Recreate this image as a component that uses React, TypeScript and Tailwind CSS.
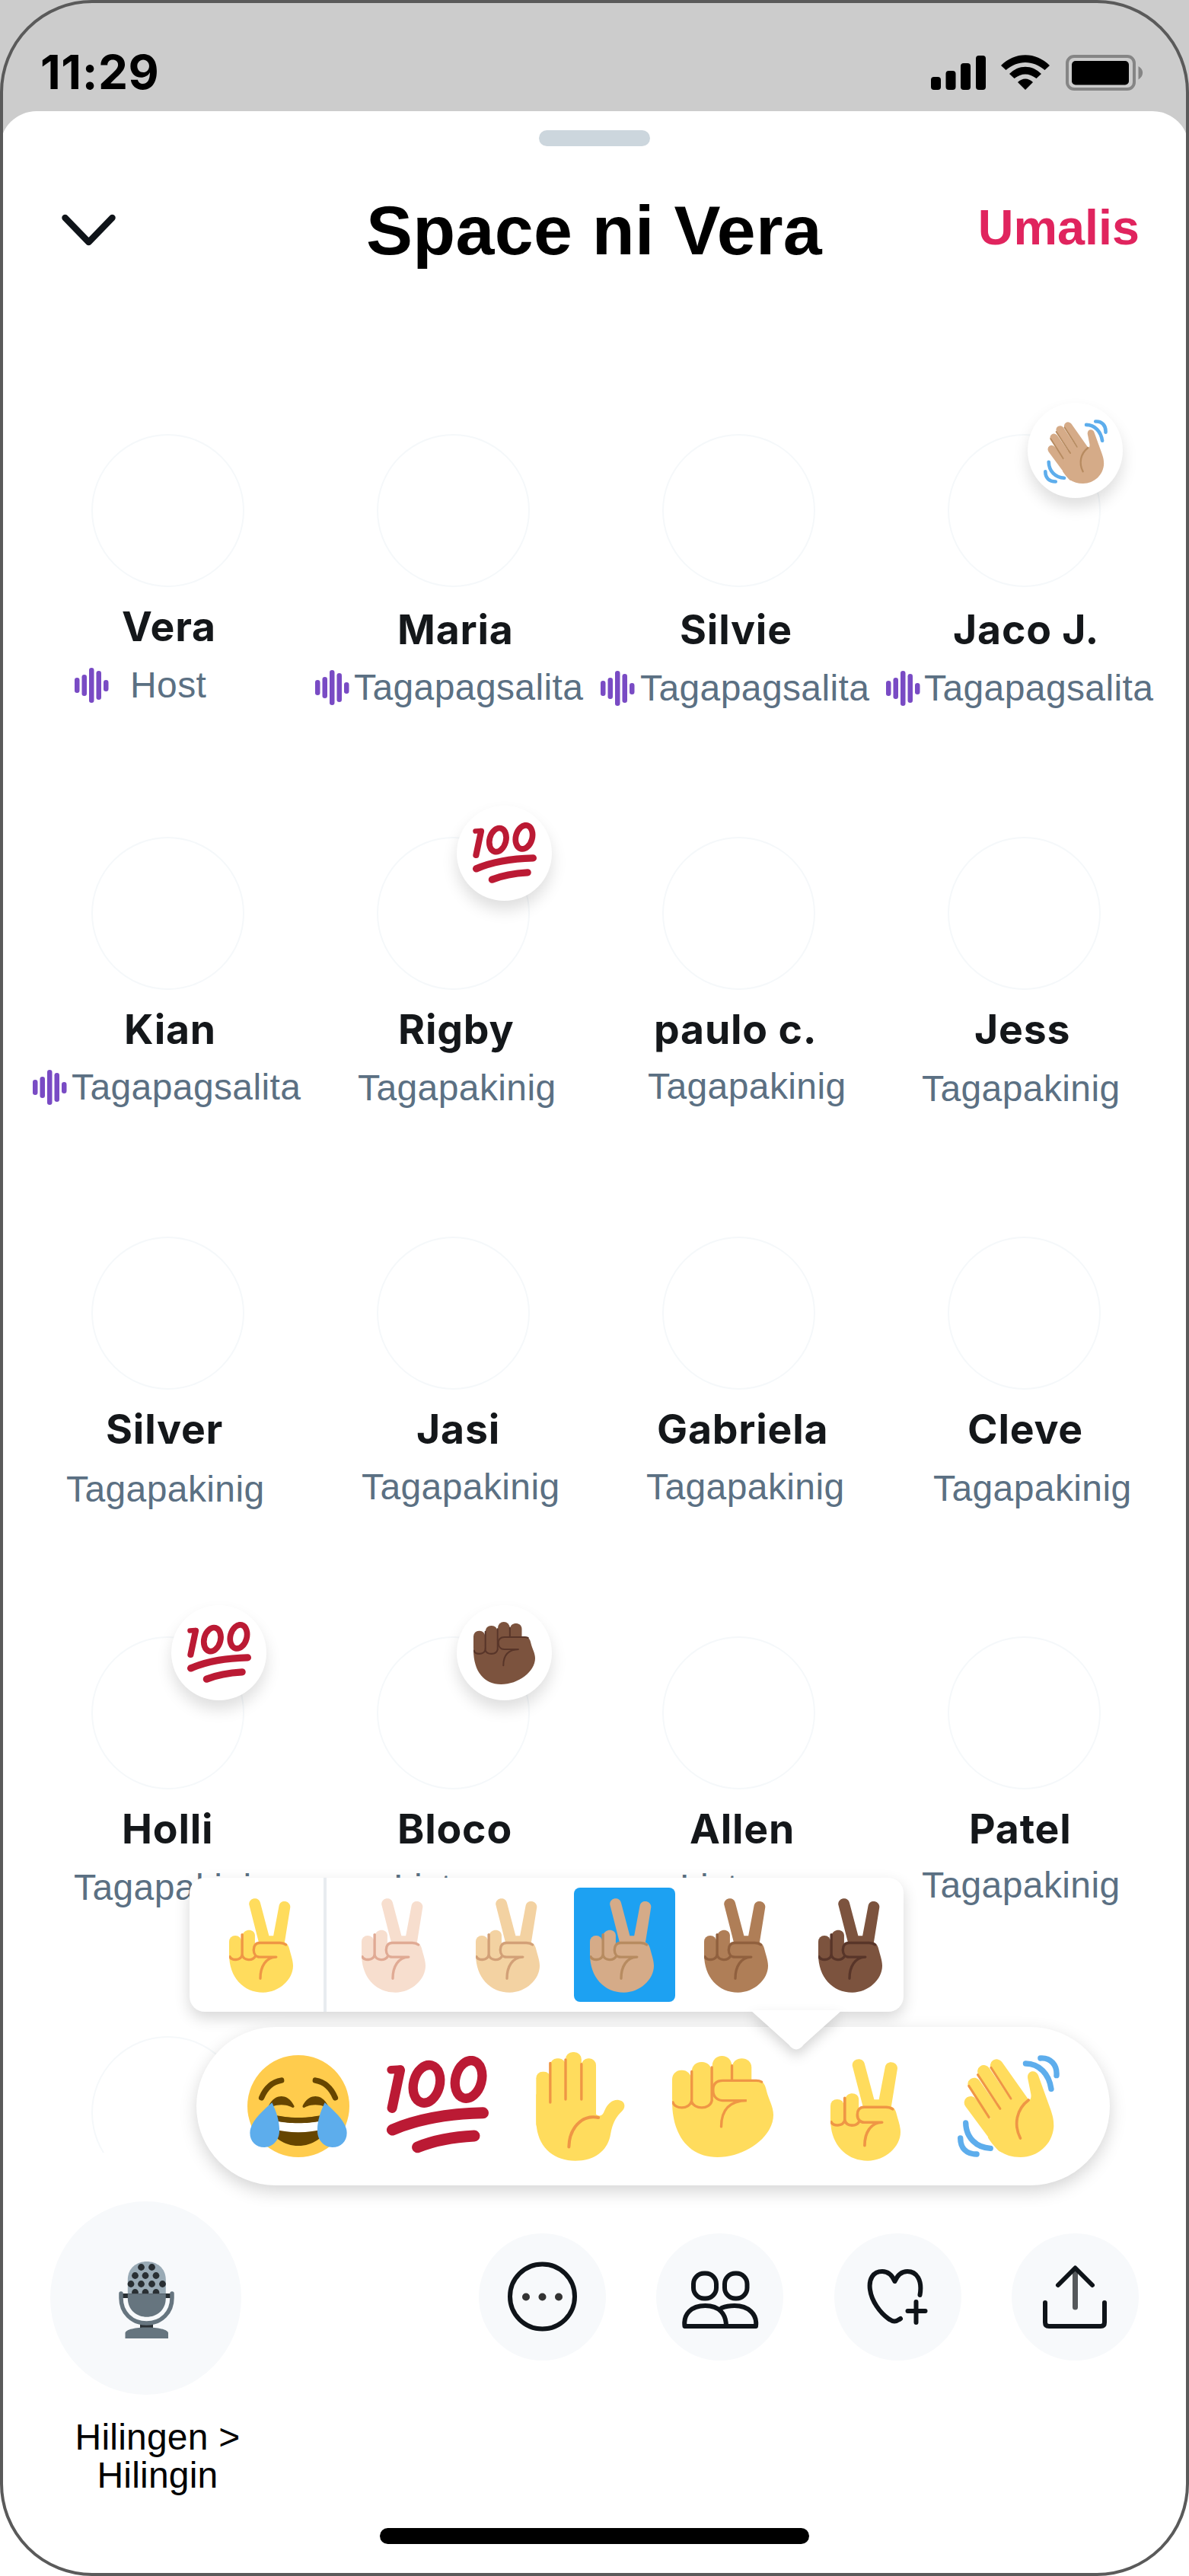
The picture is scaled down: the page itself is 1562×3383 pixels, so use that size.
import type { ReactNode } from "react";
import clsx from "clsx";

/* ---------- emoji ---------- */

const SKIN = {
  default: ["#FFDC5D", "#EF9645"],
  light: ["#F7DECE", "#E0AA94"],
  mediumLight: ["#F3D2A2", "#D2A077"],
  medium: ["#D5AB88", "#B78B60"],
  mediumDark: ["#AF7E57", "#90603E"],
  dark: ["#7C533E", "#583529"],
};

type Tone = keyof typeof SKIN;
type EmojiProps = { className?: string; tone?: Tone };

function Victory({ className, tone = "default" }: EmojiProps) {
  const [fill, line] = SKIN[tone];
  return (
    <svg viewBox="242 160 250 370" preserveAspectRatio="none" className={className}>
      <g fill={fill}>
        <path d="M320 184C319 156 359 152 364 178L398 307H415L437 190C441 162 483 168 481 195L457 345H361Z" />
        <rect x="242" y="306" width="48" height="98" rx="23" />
        <path d="M294 305C300 277 343 278 343 307V395H294Z" />
        <path d="M242 380H300L343 350C350 335 360 329 380 329H440C465 329 474 340 478 360C483 380 492 403 492 425C492 478 438 529 375 529C298 529 242 470 242 380Z" />
      </g>
      <g fill="none" stroke={line} strokeWidth="10" strokeLinecap="round" strokeLinejoin="round">
        <path d="M293 302V382" />
        <path d="M245 389C252 404 285 406 293 383C301 405 333 406 344 388" />
        <path d="M464 342C456 336 450 334.500 440 334.500H362C346 334.500 338 346 338 362C338 379 348 390 362 390H426C385 391 364 428 364 474" />
      </g>
    </svg>
  );
}

function Fist({ className, tone = "default" }: EmojiProps) {
  const [fill, line] = SKIN[tone];
  return (
    <svg viewBox="0 0 398 402" preserveAspectRatio="none" className={className}>
      <g fill={fill}>
        <rect x="0" y="57" width="75" height="150" rx="36" />
        <rect x="77" y="24" width="78" height="183" rx="37" />
        <rect x="158" y="0" width="76" height="200" rx="37" />
        <path d="M236 46C236 -2 312 -2 312 46V120H236Z" />
        <path d="M0 180L160 110C175 95 190 97 200 97H335C358 97 366 115 371 138C380 175 398 200 398 234C398 320 290 402 178 402C70 402 0 320 0 180Z" />
      </g>
      <g fill="none" stroke={line} strokeWidth="10" strokeLinecap="round">
        <path d="M77 62V175M156 45V175M235 38V94" />
        <path d="M3 184C10 212 66 214 76 180C86 214 148 214 156 178" />
        <path d="M352 103C345 99 338 98 330 98H200C175 98 161 110 161 135C161 162 177 177 198 177H293C225 178 193 215 193 281" />
      </g>
    </svg>
  );
}

function RaisedHand({ className, tone = "default" }: EmojiProps) {
  const [fill, line] = SKIN[tone];
  return (
    <svg viewBox="-46 765 348 427" preserveAspectRatio="none" className={className}>
      <g fill={fill}>
        <rect x="-45" y="842" width="56" height="230" rx="25" />
        <rect x="10" y="790" width="60" height="250" rx="26" />
        <rect x="70" y="765" width="62" height="250" rx="28" />
        <rect x="132" y="790" width="57" height="250" rx="26" />
        <path d="M-45 930H188V1008C205 1020 215 1015 222 995C235 965 255 950 278 953C304 957 306 982 290 997C265 1020 252 1050 246 1085C236 1150 185 1191 108 1191C20 1191 -45 1135 -45 1030Z" />
      </g>
      <g fill="none" stroke={line} strokeWidth="10" strokeLinecap="round">
        <path d="M10 808V962M70 795V950M132 812V950" />
        <path d="M198 1022C130 1008 84 1068 83 1137" strokeWidth="12" />
      </g>
    </svg>
  );
}

function Wave({ className, tone = "default" }: EmojiProps) {
  const [fill, line] = SKIN[tone];
  return (
    <svg viewBox="293 297 400 402" preserveAspectRatio="none" className={className}>
      <g stroke={fill} strokeWidth="50" strokeLinecap="round">
        <path d="M446 338L560 500M396 361L530 560M358 411L490 600M344 484L470 655" />
      </g>
      <path
        fill={fill}
        d="M430 500L545 450L572 474C580 474 583 462 580 448L568 388C564 356 602 352 610 378L650 490C664 528 670 545 670 575C668 645 610 699 540 699C470 699 440 665 412 622Z"
      />
      <g fill="none" stroke={line} strokeWidth="9" strokeLinecap="round">
        <path d="M424 346L502 468M372 374L460 508M337 418L416 542" />
        <path d="M571 474C524 510 512 570 539 624" strokeWidth="11" />
      </g>
      <g fill="none" stroke="#5DADEC" strokeWidth="22" strokeLinecap="round">
        <path d="M618 309C658 306 684 336 681 377M560 330C613 330 652 372 660 430" />
        <path d="M304 624C304 664 328 687 368 687M325 564C326 622 367 662 422 664" />
      </g>
    </svg>
  );
}

function Hundred({ className }: EmojiProps) {
  return (
    <svg viewBox="0 0 36 36" className={className}>
      <g fill="none" stroke="#BB1A34" strokeLinecap="round" strokeLinejoin="round">
        <line x1="1.500" y1="4.900" x2="4.900" y2="4.700" strokeWidth="2.800" />
        <line x1="4.700" y1="5.100" x2="1.900" y2="18.400" strokeWidth="3.500" />
        <ellipse cx="14.100" cy="9.900" rx="4.600" ry="6.800" strokeWidth="3.300" transform="rotate(15 14.1 9.9)" />
        <ellipse cx="28.900" cy="8.300" rx="4.600" ry="6.800" strokeWidth="3.300" transform="rotate(15 28.900 8.300)" />
        <path d="M2 26.100C11 22.200 22 20.400 34 20.100M10.900 32.200C17 29.700 23 28.600 30.900 28.200" strokeWidth="4" />
      </g>
    </svg>
  );
}

function Joy({ className }: EmojiProps) {
  return (
    <svg viewBox="0 0 36 36" className={className}>
      <circle cx="18" cy="18" r="18" fill="#FFCC4D" />
      <g fill="none" stroke="#664500" strokeLinecap="round">
        <path d="M5 15C6.600 11.200 9 9.400 12 8.900M31 15C29.400 11.200 27 9.400 24 8.900" strokeWidth="2" />
      </g>
      <path
        fill="#664500"
        d="M28.457 17.797c-.06-.135-1.499-3.297-4.457-3.297-2.957 0-4.397 3.162-4.457 3.297-.3.700.400.900.755.605.012-.009 1.262-.902 3.702-.902 2.426 0 3.674.881 3.702.901.500.300 1.100-.1.755-.604zM16.457 17.797c-.06-.135-1.499-3.297-4.457-3.297-2.957 0-4.397 3.162-4.457 3.297-.3.700.400.900.755.605.012-.009 1.262-.902 3.702-.902 2.426 0 3.674.881 3.702.901.500.300 1.100-.1.755-.604z"
      />
      <path
        fill="#664500"
        d="M18 22c-3.623 0-6.027-.422-9-1-.679-.131-2 0-2 2 0 4 4.595 9 11 9 6.404 0 11-5 11-9 0-2-1.321-2.132-2-2-2.973.578-5.377 1-9 1z"
      />
      <path fill="#FFF" d="M9 23s3 1 9 1 9-1 9-1v3Q23 27.200 18 27.200T9 26z" />
      <g fill="#5DADEC">
        <path d="M8.700 16.700C10.500 20.500 11.300 23.500 11.300 26.600C11.300 30 9 32.400 6 32.500C3 32.500.900 30.500.900 27.400C.900 23.500 5.500 19.500 8.700 16.700Z" />
        <path d="M27.300 16.700C25.500 20.500 24.700 23.500 24.700 26.600C24.700 30 27 32.400 30 32.500C33 32.500 35.100 30.500 35.100 27.400C35.100 23.500 30.500 19.500 27.300 16.700Z" />
      </g>
    </svg>
  );
}

/* ---------- status bar ---------- */

function StatusBar() {
  return (
    <div className="flex h-[146px] items-start justify-between bg-[#ccc]">
      <span className="mt-[57px] ml-[53px] font-[Inter,sans-serif] text-[62px] leading-[75px] font-bold tracking-[0.6px]">
        11:29
      </span>
      <svg className="mt-[70px] mr-[58px] h-[52px] w-[284px]" viewBox="1220 70 284 52">
        <rect x="1223" y="101" width="13" height="17" rx="4" />
        <rect x="1242.500" y="93" width="13" height="25" rx="4" />
        <rect x="1262" y="83" width="13" height="35" rx="4" />
        <rect x="1282" y="73" width="13" height="45" rx="4" />
        <path d="M1315 86C1333 67.500 1361 67.500 1379 86L1372.500 92C1357 78.500 1337 78.500 1321.500 92Z" />
        <path d="M1326 97C1338 84.500 1356 84.500 1368 97L1361.500 103C1352 95.500 1342 95.500 1332.500 103Z" />
        <path d="M1337 108C1343 102 1351 102 1357 108L1347 118Z" />
        <rect x="1402" y="74" width="88" height="43" rx="9" fill="none" stroke="#858585" strokeWidth="4" />
        <rect x="1408" y="80" width="75" height="31.500" rx="5" />
        <path d="M1495.500 87C1503 91 1503 100 1495.500 104.500Z" fill="#858585" />
      </svg>
    </div>
  );
}

function Header() {
  return (
    <div className="mt-[50px] flex h-[120px] items-start font-['Liberation_Sans',Arial,sans-serif] font-bold">
      <svg className="mt-[39px] ml-[80px] h-[43px] w-[73px]" viewBox="0 0 73 43">
        <path d="M5.500 5L36.500 37L67.500 5" fill="none" stroke="#0f1419" strokeWidth="8.500" strokeLinecap="round" strokeLinejoin="round" />
      </svg>
      <h1 className="ml-[328px] text-[91.5px] leading-[120px] tracking-[0.3px] whitespace-nowrap">Space ni Vera</h1>
      <button className="mt-[17px] mr-[65px] ml-auto text-[64.7px] leading-[80px] tracking-normal text-[#e0245e]">
        Umalis
      </button>
    </div>
  );
}

/* ---------- people ---------- */

function VoiceIcon() {
  return (
    <svg className="mt-[7px] h-[46px] w-[45px] shrink-0" viewBox="0 0 45 46" fill="#794bc4">
      <rect x="0" y="13" width="6.500" height="20" rx="3.200" />
      <rect x="9.500" y="9" width="6.500" height="28" rx="3.200" />
      <rect x="19" y="0" width="6.500" height="46" rx="3.200" />
      <rect x="28.500" y="4" width="6.500" height="38" rx="3.200" />
      <rect x="38" y="16" width="6.500" height="15" rx="3.200" />
    </svg>
  );
}

type Person = {
  name: string;
  nameAt: string;
  role: string;
  roleAt: string;
  speaking?: string;
  reaction?: ReactNode;
};

const rows: Person[][] = [
  [
    { name: "Vera", nameAt: "ml-[127px] mt-[22px]", role: "Host", roleAt: "ml-[65px] mt-[18px]", speaking: "gap-[28px]" },
    { name: "Maria", nameAt: "ml-[114px] mt-[26px]", role: "Tagapagsalita", roleAt: "ml-[6px] mt-[17px]", speaking: "gap-[6px]" },
    { name: "Silvie", nameAt: "ml-[110px] mt-[26px]", role: "Tagapagsalita", roleAt: "ml-[6px] mt-[18px]", speaking: "gap-[7px]" },
    {
      name: "Jaco J.",
      nameAt: "ml-[94px] mt-[26px]",
      role: "Tagapagsalita",
      roleAt: "ml-[6px] mt-[18px]",
      speaking: "gap-[5px]",
      reaction: <Wave tone="medium" className="h-[84px] w-[84px]" />,
    },
  ],
  [
    { name: "Kian", nameAt: "ml-[130px] mt-[22px]", role: "Tagapagsalita", roleAt: "ml-[10px] mt-[17px]", speaking: "gap-[6px]" },
    {
      name: "Rigby",
      nameAt: "ml-[115px] mt-[22px]",
      role: "Tagapakinig",
      roleAt: "ml-[62px] mt-[18px]",
      reaction: <Hundred className="h-[84px] w-[84px]" />,
    },
    { name: "paulo c.", nameAt: "ml-[76px] mt-[22px]", role: "Tagapakinig", roleAt: "ml-[68px] mt-[16px]" },
    { name: "Jess", nameAt: "ml-[122px] mt-[22px]", role: "Tagapakinig", roleAt: "ml-[53px] mt-[19px]" },
  ],
  [
    { name: "Silver", nameAt: "ml-[106px] mt-[22px]", role: "Tagapakinig", roleAt: "ml-[54px] mt-[20px]" },
    { name: "Jasi", nameAt: "ml-[139px] mt-[22px]", role: "Tagapakinig", roleAt: "ml-[67px] mt-[17px]" },
    { name: "Gabriela", nameAt: "ml-[80px] mt-[22px]", role: "Tagapakinig", roleAt: "ml-[66px] mt-[17px]" },
    { name: "Cleve", nameAt: "ml-[113px] mt-[22px]", role: "Tagapakinig", roleAt: "ml-[68px] mt-[19px]" },
  ],
  [
    {
      name: "Holli",
      nameAt: "ml-[127px] mt-[22px]",
      role: "Tagapakinig",
      roleAt: "ml-[64px] mt-[18px]",
      reaction: <Hundred className="h-[84px] w-[84px]" />,
    },
    {
      name: "Bloco",
      nameAt: "ml-[114px] mt-[22px]",
      role: "Listener",
      roleAt: "ml-[109px] mt-[18px]",
      reaction: <Fist tone="dark" className="ml-px h-[82px] w-[81px]" />,
    },
    { name: "Allen", nameAt: "ml-[123px] mt-[22px]", role: "Listener", roleAt: "ml-[110px] mt-[18px]" },
    { name: "Patel", nameAt: "ml-[115px] mt-[22px]", role: "Tagapakinig", roleAt: "ml-[53px] mt-[15px]" },
  ],
];

function Avatar({ reaction }: { reaction?: ReactNode }) {
  return (
    <div className="relative mx-auto h-[201px] w-[201px] rounded-full border-2 border-[#f5f8fa]">
      {reaction && (
        <div className="absolute top-[-43px] left-[103px] h-[125px] w-[125px] rounded-full bg-white pt-[22px] pl-[21px] shadow-[0_12px_20px_rgba(0,0,0,0.13)]">
          {reaction}
        </div>
      )}
    </div>
  );
}

function PersonCell({ name, nameAt, role, roleAt, speaking, reaction }: Person) {
  return (
    <div className="whitespace-nowrap">
      <Avatar reaction={reaction} />
      <div
        className={clsx(
          "-mb-px font-[Inter,sans-serif] text-[53.5px] leading-[60px] font-bold tracking-[0.8px] text-[#14171a]",
          nameAt,
        )}
      >
        {name}
      </div>
      <div
        className={clsx(
          "flex font-['Liberation_Sans',Arial,sans-serif] text-[48px] leading-[60px] tracking-[0.4px] text-[#5b7083]",
          roleAt,
          speaking,
        )}
      >
        {speaking && <VoiceIcon />}
        <span>{role}</span>
      </div>
    </div>
  );
}

function PeopleGrid() {
  return (
    <div className="mt-[208px] ml-[33px] grid h-[2257px] w-[1500px] grid-cols-4 grid-rows-[529px_525px_525px_525px_153px]">
      {rows.flat().map((p) => (
        <PersonCell key={p.name} {...p} />
      ))}
      {/* next row, cut off by the toolbar */}
      <div className="overflow-hidden">
        <Avatar />
      </div>
    </div>
  );
}

/* ---------- reaction picker ---------- */

const tones: Tone[] = ["light", "mediumLight", "medium", "mediumDark", "dark"];

function TonePopup() {
  return (
    <div className="absolute top-[2466px] left-[249px] flex h-[176px] w-[938px] rounded-[20px] bg-white shadow-[0_8px_20px_rgba(0,0,0,0.16)]">
      <div className="w-[176px] pt-[27px] pl-[52px]">
        <Victory className="h-[124px] w-[84px]" />
      </div>
      <div className="w-[4px] bg-[#e8ecf0]" />
      <div className="flex gap-[17px] pt-[13px] pl-[25px]">
        {tones.map((tone) => (
          <div
            key={tone}
            className={clsx("h-[150px] w-[133px] rounded-[8px] pt-[14px] pl-[21px]", tone === "medium" && "bg-[#1da1f2]")}
          >
            <Victory tone={tone} className="h-[124px] w-[84px]" />
          </div>
        ))}
      </div>
    </div>
  );
}

function ReactionBar() {
  return (
    <div className="absolute top-[2662px] left-[258px] flex h-[208px] w-[1200px] items-start rounded-[104px] bg-white pl-[67px] shadow-[0_8px_22px_rgba(0,0,0,0.17)]">
      <Joy className="mt-[37px] h-[134px] w-[134px]" />
      <Hundred className="mt-[38px] ml-[49px] h-[134px] w-[134px]" />
      <RaisedHand className="mt-[33px] ml-[62px] h-[143px] w-[117px]" />
      <Fist className="mt-[38px] ml-[62px] h-[133px] w-[133px]" />
      <Victory className="mt-[42px] ml-[75px] h-[134px] w-[92px]" />
      <Wave className="mt-[37px] ml-[75px] h-[134px] w-[134px]" />
    </div>
  );
}

function PopupTail() {
  return (
    <svg
      className="absolute top-[2640px] left-[986px] h-[54px] w-[120px] overflow-visible drop-shadow-[0_8px_8px_rgba(0,0,0,0.16)]"
      viewBox="0 0 120 54"
    >
      <path d="M0 0H120L70 45Q60 58 50 45Z" fill="#fff" />
    </svg>
  );
}

/* ---------- bottom toolbar ---------- */

function Microphone() {
  return (
    <svg className="mx-auto mt-[77px] h-[104px] w-[74px]" viewBox="154 2968 74 104">
      <path d="M166.800 3014V2994C166.800 2962 216.800 2962 216.800 2994V3014Z" fill="#99AAB5" />
      <g fill="#292F33">
        <circle cx="184.500" cy="2977.500" r="4.400" />
        <circle cx="198.500" cy="2977.500" r="4.400" />
        <circle cx="176.500" cy="2988.500" r="4.400" />
        <circle cx="190" cy="2988.500" r="4.400" />
        <circle cx="204" cy="2988.500" r="4.400" />
        <circle cx="171" cy="2999.500" r="4.400" />
        <circle cx="184.500" cy="2999.500" r="4.400" />
        <circle cx="198.500" cy="2999.500" r="4.400" />
        <circle cx="212.500" cy="2999.500" r="4.400" />
        <circle cx="176.500" cy="3010.500" r="4.400" />
        <circle cx="190" cy="3010.500" r="4.400" />
        <circle cx="204" cy="3010.500" r="4.400" />
        <path d="M160 3012H223V3018H160ZM183 3051H200V3058H183Z" />
      </g>
      <path d="M166.800 3012.300H216.800V3018C216.800 3051 166.800 3051 166.800 3018Z" fill="#66757F" />
      <path
        d="M158 3012V3018C158 3037 172 3051 191.500 3051C211 3051 225 3037 225 3018V3012"
        fill="none"
        stroke="#66757F"
        strokeWidth="5.500"
        strokeLinecap="round"
      />
      <path d="M163.500 3071V3064C164 3054 219.500 3054 220 3064V3071Z" fill="#66757F" />
    </svg>
  );
}

function ToolButton({ label, children }: { label: string; children: ReactNode }) {
  return (
    <button aria-label={label} className="h-[167px] w-[167px] rounded-full bg-[#f7f9fb]">
      <svg
        className="block h-[167px] w-[167px]"
        viewBox="0 0 167 167"
        fill="none"
        stroke="#0f1419"
        strokeWidth="6"
        strokeLinecap="round"
        strokeLinejoin="round"
      >
        {children}
      </svg>
    </button>
  );
}

function Toolbar() {
  return (
    <div className="mt-[64px] flex h-[429px] items-start pl-[66px]">
      <div className="w-[251px]">
        <button aria-label="Mikropono" className="block h-[254px] w-[251px] rounded-[50%] bg-[#f7f9fb] align-top">
          <Microphone />
          <span className="block h-[73px]" />
        </button>
        <p className="mt-[31px] ml-[16px] w-[250px] text-center font-['Liberation_Sans',Arial,sans-serif] text-[48px] leading-[50px] tracking-[0.2px] whitespace-nowrap">
          Hilingen &gt;
          <br />
          Hilingin
        </p>
      </div>
      <div className="mt-[42px] ml-[312px] flex w-[867px] justify-between">
        <ToolButton label="Higit pa">
          <circle cx="83.500" cy="83" r="42.500" />
          <g fill="#333" stroke="none">
            <circle cx="62" cy="83.500" r="5" />
            <circle cx="83.500" cy="83.500" r="5" />
            <circle cx="105" cy="83.500" r="5" />
          </g>
        </ToolButton>
        <ToolButton label="Mga tao">
          <rect x="49" y="52.500" width="30" height="33" rx="14" />
          <rect x="90" y="52.500" width="29.500" height="33" rx="14" />
          <path d="M37.500 122C35.500 106 46 95 64.500 95C83 95 92 106 92 122Z" />
          <path d="M86 98C91 96 97 95 103 95C121 95 133 106 131 122H93" />
        </ToolButton>
        <ToolButton label="Mag-react">
          <path d="M112.500 81C116 61 108 50 96 50C88 50 83 55 79.500 63C76 55 71 50 63 50C51 50 45 60 47 74C49 89 60 104 71 112C77 116.500 81 116.500 87 112" />
          <path d="M96.500 102H119.500M107.500 90V117" />
        </ToolButton>
        <ToolButton label="Ibahagi">
          <path d="M83.500 97V48" strokeWidth="7" stroke="#55585b" />
          <path d="M61 68L83.500 45.500L106 68" />
          <path d="M44 91V117Q44 122 49 122H117Q122 122 122 117V91" />
        </ToolButton>
      </div>
    </div>
  );
}

export default function App() {
  return (
    <div className="relative h-[3383px] w-[1562px] overflow-hidden bg-white text-black">
      <StatusBar />
      <div className="bg-[linear-gradient(#ccc_48px,#fff_48px)]">
        <main className="h-[3237px] rounded-t-[48px] bg-white pt-[25px]">
          <div className="mx-auto h-[21px] w-[146px] rounded-full bg-[#ccd6dd]" />
          <Header />
          <PeopleGrid />
          <Toolbar />
          <div className="mx-auto h-[21px] w-[564px] rounded-full bg-black" />
        </main>
      </div>

      <TonePopup />
      <ReactionBar />
      <PopupTail />

      {/* device frame */}
      <div className="pointer-events-none absolute inset-0 rounded-[121px] border-4 border-[#5a5a5a]" />
    </div>
  );
}
